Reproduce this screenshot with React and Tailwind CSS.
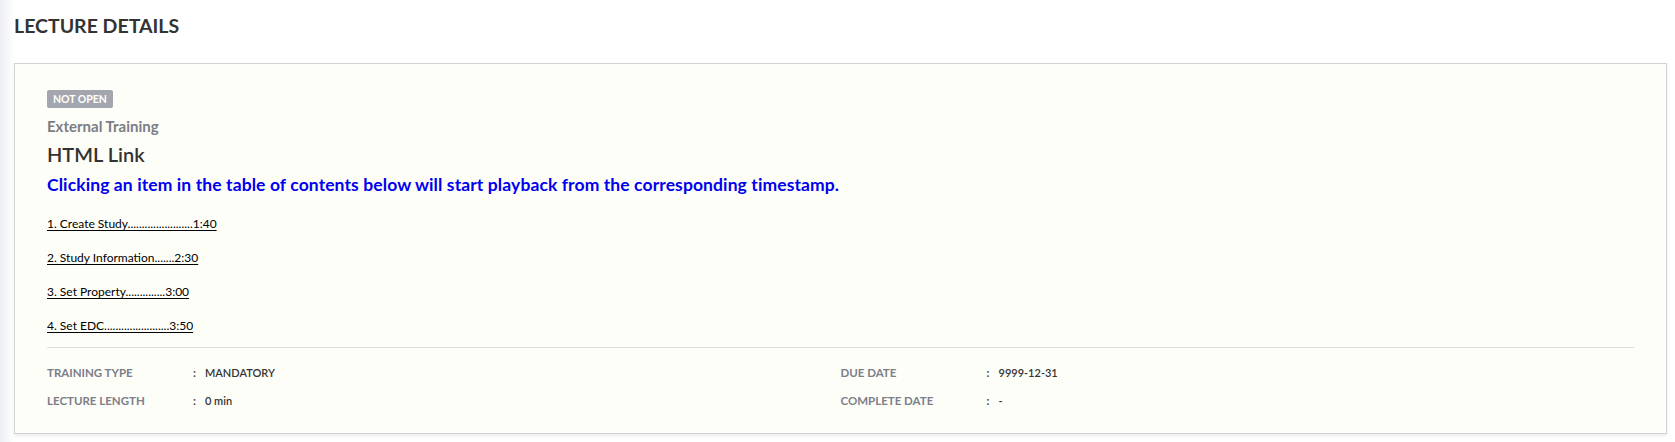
import React from "react";

const toc = [
  "1. Create Study.......................1:40",
  "2. Study Information.......2:30",
  "3. Set Property..............3:00",
  "4. Set EDC.......................3:50",
];

function Row({ label, value }) {
  return (
    <div className="flex h-[20px] items-center leading-[20px]">
      <div className="w-[146px] text-[11.5px] font-bold text-[#7c7f8a]">{label}</div>
      <div className="w-[12px] text-[11.5px] font-bold text-[#4a4a4a]">:</div>
      <div className="text-[11px] font-semibold text-[#333]">{value}</div>
    </div>
  );
}

export default function App() {
  return (
    <div
      className="relative h-[442px] w-[1675px] overflow-hidden bg-white"
      style={{ fontFamily: "Lato, 'Noto Sans', sans-serif" }}
    >
      <div className="absolute left-0 top-0 h-full w-[14px] bg-gradient-to-r from-[#eceef4] to-white" />
      <div className="relative px-[14px] pt-[12px]">
        <h1 className="h-[27px] text-[19.5px] font-bold leading-[27px] text-[#333]">LECTURE DETAILS</h1>
        <div className="mt-[24px] flex h-[371px] w-[1653px] flex-col border border-[#d2d2d2] bg-[#fefef8] px-[32px] pt-[26px] shadow-[0_2px_3px_rgba(0,0,0,0.08)]">
          <div className="flex h-[18px] w-fit items-center rounded-[2px] bg-[#a3a6ae] px-[6px] text-[10.5px] font-bold leading-[18px] text-white">
            NOT OPEN
          </div>
          <div className="mt-[8px] h-[20px] text-[15px] font-bold leading-[20px] text-[#7b7d85]">External Training</div>
          <div className="mt-[4px] h-[28px] text-[20px] font-semibold leading-[28px] text-[#333]">HTML Link</div>
          <div className="mt-[4px] h-[26px] text-[17.5px] font-bold leading-[26px] tracking-[0.1px] text-[#0000ee]">
            Clicking an item in the table of contents below will start playback from the corresponding timestamp.
          </div>
          <div className="mt-[16px] flex flex-col gap-[14px]">
            {toc.map((t) => (
              <div key={t} className="h-[20px] text-[12px] leading-[20px] text-black">
                <span className="underline underline-offset-2">{t}</span>
              </div>
            ))}
          </div>
          <div className="mt-[11px] border-t border-[#dedede]" />
          <div className="mt-[15px] grid grid-cols-2">
            <div className="flex flex-col gap-[8px]">
              <Row label="TRAINING TYPE" value="MANDATORY" />
              <Row label="LECTURE LENGTH" value="0 min" />
            </div>
            <div className="flex flex-col gap-[8px]">
              <Row label="DUE DATE" value="9999-12-31" />
              <Row label="COMPLETE DATE" value="-" />
            </div>
          </div>
        </div>
      </div>
    </div>
  );
}
